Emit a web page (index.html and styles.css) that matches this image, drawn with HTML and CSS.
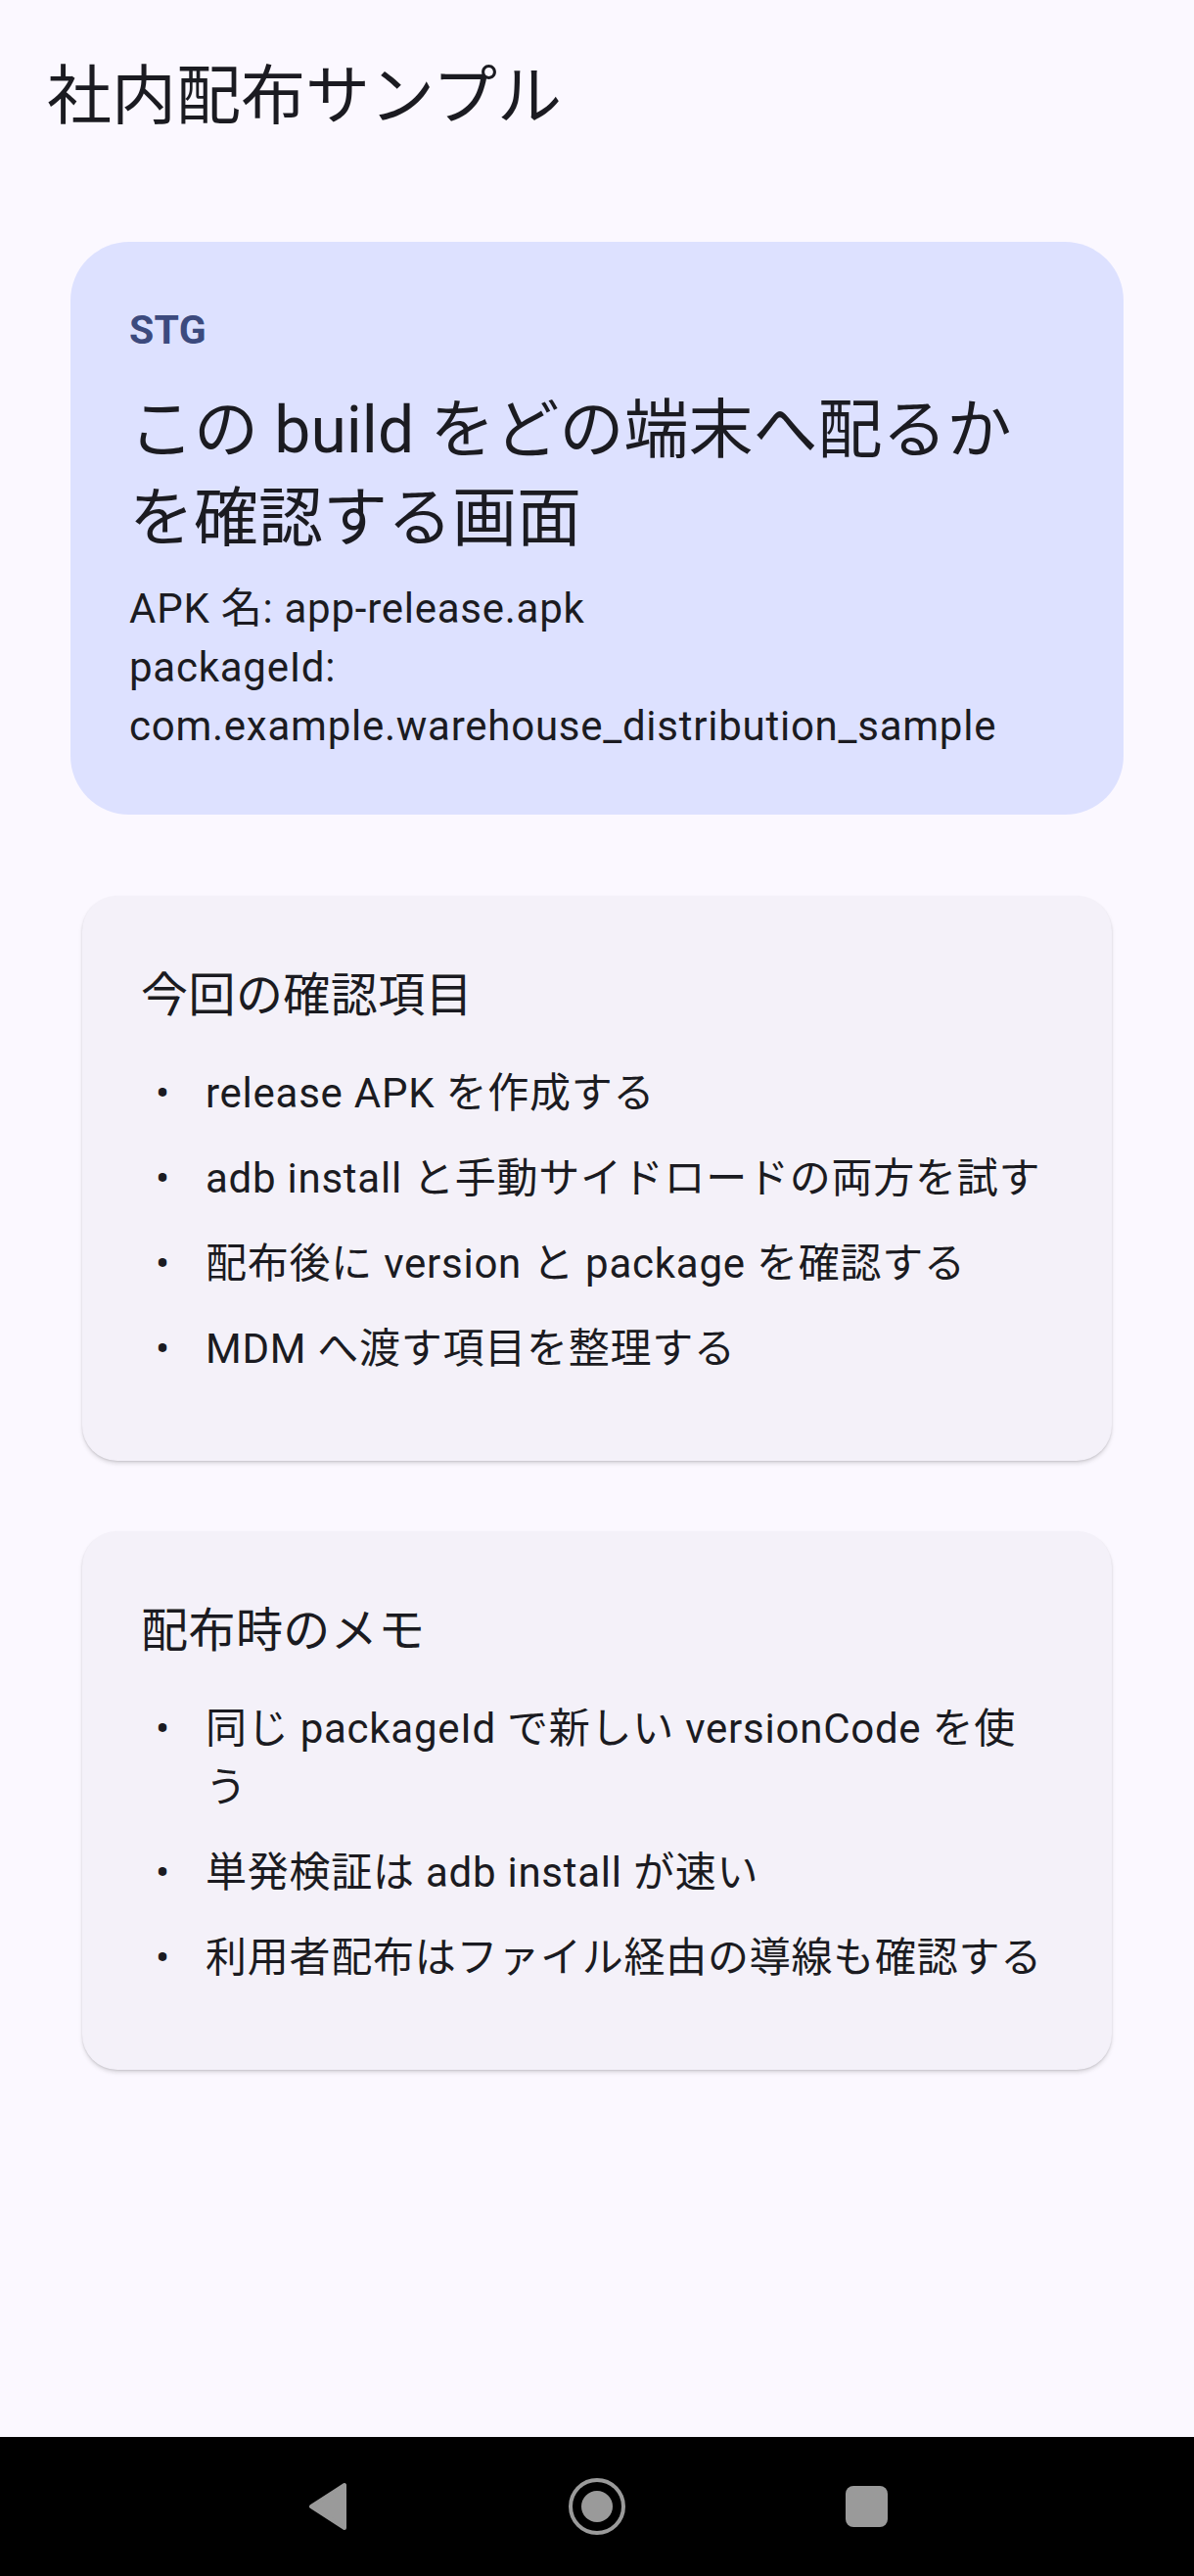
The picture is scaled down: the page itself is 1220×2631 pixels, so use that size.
FILE: index.html
```html
<!DOCTYPE html>
<html lang="ja">
<head>
    <meta charset="UTF-8">
    <meta name="viewport" content="width=device-width, initial-scale=1.0">
    <title>社内配布サンプル</title>
    <link rel="stylesheet" href="styles.css">
</head>
<body>
    <div class="screen">
        <header class="app-bar">
            <h1>社内配布サンプル</h1>
        </header>

        <main class="content">
            <!-- 配布対象ビルドの概要 -->
            <section class="hero">
                <div class="hero-env">STG</div>
                <h2 class="hero-title">この build をどの端末へ配るかを確認する画面</h2>
                <p class="hero-meta">APK 名: app-release.apk</p>
                <p class="hero-meta">packageId: com.example.warehouse_distribution_sample</p>
            </section>

            <section class="card">
                <h3>今回の確認項目</h3>
                <ul class="bullets">
                    <li><span class="dot">•</span><span>release APK を作成する</span></li>
                    <li><span class="dot">•</span><span>adb install と手動サイドロードの両方を試す</span></li>
                    <li><span class="dot">•</span><span>配布後に version と package を確認する</span></li>
                    <li><span class="dot">•</span><span>MDM へ渡す項目を整理する</span></li>
                </ul>
            </section>

            <section class="card">
                <h3>配布時のメモ</h3>
                <ul class="bullets">
                    <li><span class="dot">•</span><span>同じ packageId で新しい versionCode を使う</span></li>
                    <li><span class="dot">•</span><span>単発検証は adb install が速い</span></li>
                    <li><span class="dot">•</span><span>利用者配布はファイル経由の導線も確認する</span></li>
                </ul>
            </section>
        </main>

        <!-- Android ナビゲーションバー -->
        <nav class="nav-bar">
            <div class="nav-slot">
                <svg width="44" height="52" viewBox="0 0 44 52">
                    <path d="M39 4 L39 48 L5 26 Z" fill="#9a9a9a" stroke="#9a9a9a" stroke-width="4" stroke-linejoin="round"/>
                </svg>
            </div>
            <div class="nav-slot">
                <svg width="62" height="62" viewBox="0 0 62 62">
                    <circle cx="31" cy="31" r="27" fill="none" stroke="#9a9a9a" stroke-width="4"/>
                    <circle cx="31" cy="31" r="16" fill="#9a9a9a"/>
                </svg>
            </div>
            <div class="nav-slot">
                <div class="recents"></div>
            </div>
        </nav>
    </div>
</body>
</html>
```

FILE: styles.css
```css
body {
    margin: 0;
    background-color: #fbf8ff;
    color: #1b1b21;
    font-family: Roboto, "Noto Sans CJK JP", sans-serif;
}
.screen {
    display: flex;
    flex-direction: column;
    min-height: 100vh;
}
.app-bar {
    padding: 57px 48px 0;
}
.app-bar h1 {
    margin: 0;
    font-size: 66px;
    line-height: 84px;
    font-weight: 400;
}
.content {
    padding: 106px 72px 0;
}

/* Übersichtskarte */
.hero {
    background-color: #dde1ff;
    border-radius: 60px;
    padding: 60px;
}
.hero-env {
    font-size: 41px;
    line-height: 60px;
    font-weight: 700;
    letter-spacing: 0.3px;
    color: #3c4a7e;
}
.hero-title {
    margin: 28px 0 0;
    font-size: 66px;
    line-height: 90px;
    font-weight: 400;
}
.hero-meta {
    margin: 0;
    font-size: 42px;
    line-height: 60px;
    letter-spacing: 0.75px;
}
.hero-title + .hero-meta {
    margin-top: 17px;
}

/* Listenkarten */
.card {
    margin: 0 12px;
    padding: 60px 66px 57px 60px;
    background-color: #f4f1f9;
    border-radius: 36px;
    box-shadow: 0 3px 4px rgba(0, 0, 0, 0.12), 0 1px 2px rgba(0, 0, 0, 0.10);
}
.hero + .card {
    margin-top: 83px;
}
.card + .card {
    margin-top: 72px;
}
.card h3 {
    margin: 0 0 28px;
    font-size: 48px;
    line-height: 84px;
    font-weight: 400;
    letter-spacing: 0.45px;
}
.bullets {
    list-style-type: none;
    margin: 0;
    padding: 0;
}
.bullets li {
    display: flex;
    font-size: 42px;
    line-height: 60px;
    letter-spacing: 0.75px;
    padding-bottom: 27px;
}
.dot {
    flex: none;
    width: 66px;
    padding-left: 15px;
    box-sizing: border-box;
}

/* Navigationsleiste */
.nav-bar {
    margin-top: auto;
    height: 142px;
    background-color: #000;
    display: flex;
    justify-content: center;
    align-items: center;
    gap: 155px;
}
.nav-slot {
    width: 120px;
    display: flex;
    justify-content: center;
    align-items: center;
}
.recents {
    width: 43px;
    height: 42px;
    border-radius: 8px;
    background-color: #9a9a9a;
}
```
